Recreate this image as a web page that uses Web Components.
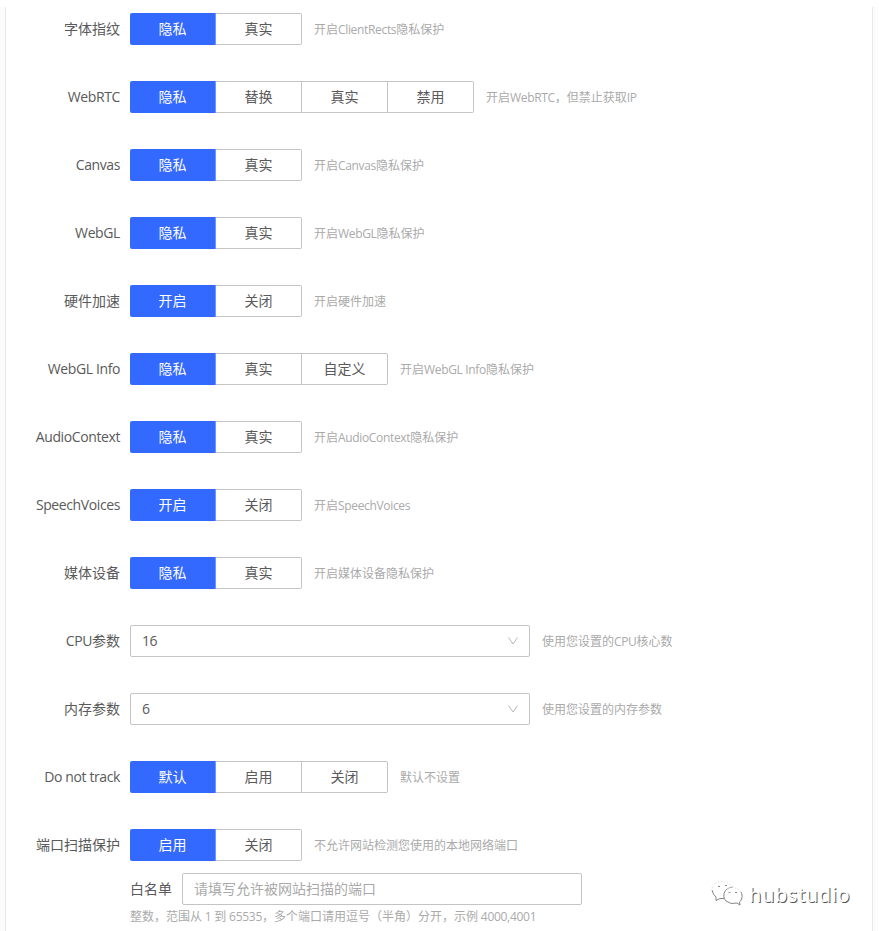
<!DOCTYPE html>
<html lang="zh-CN">
  <head>
    <meta charset="UTF-8">
    <meta name="viewport" content="width=device-width, initial-scale=1.0">

    <title>指纹设置</title>

    <style>
      body {
        margin: 0;
        background: #fff;
        color: #5a5a5a;
        font: 14px/22px "Open Sans", "Noto Sans CJK SC", sans-serif;
      }
    </style>
  </head>

  <body>
    <settings-panel>
      <form-row label="字体指纹" hint="开启ClientRects隐私保护">
        <radio-group options="隐私,真实"></radio-group>
      </form-row>
      <form-row label="WebRTC" hint="开启WebRTC，但禁止获取IP">
        <radio-group options="隐私,替换,真实,禁用"></radio-group>
      </form-row>
      <form-row label="Canvas" hint="开启Canvas隐私保护">
        <radio-group options="隐私,真实"></radio-group>
      </form-row>
      <form-row label="WebGL" hint="开启WebGL隐私保护">
        <radio-group options="隐私,真实"></radio-group>
      </form-row>
      <form-row label="硬件加速" hint="开启硬件加速">
        <radio-group options="开启,关闭"></radio-group>
      </form-row>
      <form-row label="WebGL Info" hint="开启WebGL Info隐私保护">
        <radio-group options="隐私,真实,自定义"></radio-group>
      </form-row>
      <form-row label="AudioContext" hint="开启AudioContext隐私保护">
        <radio-group options="隐私,真实"></radio-group>
      </form-row>
      <form-row label="SpeechVoices" hint="开启SpeechVoices">
        <radio-group options="开启,关闭"></radio-group>
      </form-row>
      <form-row label="媒体设备" hint="开启媒体设备隐私保护">
        <radio-group options="隐私,真实"></radio-group>
      </form-row>
      <form-row label="CPU参数" hint="使用您设置的CPU核心数">
        <select-box>16</select-box>
      </form-row>
      <form-row label="内存参数" hint="使用您设置的内存参数">
        <select-box>6</select-box>
      </form-row>
      <form-row label="Do not track" hint="默认不设置">
        <radio-group options="默认,启用,关闭"></radio-group>
      </form-row>
      <form-row label="端口扫描保护" hint="不允许网站检测您使用的本地网络端口">
        <radio-group options="启用,关闭"></radio-group>
      </form-row>
      <port-whitelist
        label="白名单"
        placeholder="请填写允许被网站扫描的端口"
        hint="整数，范围从 1 到 65535，多个端口请用逗号（半角）分开，示例 4000,4001"
      ></port-whitelist>
    </settings-panel>
    <water-mark>hubstudio</water-mark>

    <template id="settings-panel-template">
      <style>
        :host {
          display: block;
          box-sizing: border-box;
          height: 931px;
          padding: 7px 6px 0 5px;
          overflow: hidden;
          background: linear-gradient(#fff 7px, #fcfcfc 7px);
        }

        section {
          box-sizing: border-box;
          height: 924px;
          padding-top: 6px;
          border: solid #e8e8e8;
          border-width: 0 1px;
          background: #fff;
        }
      </style>
      <section><slot></slot></section>
    </template>

    <template id="form-row-template">
      <style>
        :host {
          display: flex;
          align-items: center;
          height: 32px;
          margin-bottom: 36px;
          white-space: nowrap;
        }

        .label {
          width: 114px;
          margin-right: 10px;
          text-align: right;
        }

        .hint {
          margin-left: 12px;
          padding-top: 2px;
          color: #aaa;
          font-size: 12px;
        }

        .latin {
          letter-spacing: -0.028em;
        }
      </style>
      <span class="label"></span>
      <slot></slot>
      <span class="hint"></span>
    </template>

    <template id="radio-group-template">
      <style>
        :host {
          display: flex;
        }

        .options {
          display: flex;
        }

        span {
          box-sizing: border-box;
          width: 86px;
          height: 32px;
          border: 1px solid #c4c4c4;
          border-left: 0;
          line-height: 30px;
          text-align: center;
        }

        span:first-child {
          border: 0;
          border-right: 1px solid #6f95ff;
          border-radius: 2px 0 0 2px;
          background: #3369ff;
          color: #fff;
          line-height: 32px;
        }

        span:last-child {
          border-radius: 0 2px 2px 0;
        }
      </style>
      <div class="options"></div>
    </template>

    <template id="select-box-template">
      <style>
        :host {
          display: flex;
          align-items: center;
          justify-content: space-between;
          box-sizing: border-box;
          width: 400px;
          height: 32px;
          padding: 0 11px;
          border: 1px solid #c4c4c4;
          border-radius: 2px;
        }

        span {
          letter-spacing: -0.4px;
        }
      </style>
      <span><slot></slot></span>
      <svg width="10" height="8" viewBox="0 0 10 8" fill="none" stroke="#b8b8b8">
        <path d="M.5 .5 5 7 9.500 .5"/>
      </svg>
    </template>

    <template id="port-whitelist-template">
      <style>
        :host {
          display: block;
          margin: -24px 0 0 124px;
          white-space: nowrap;
        }

        .field {
          display: flex;
          align-items: center;
        }

        .label {
          width: 52px;
        }

        .input {
          box-sizing: border-box;
          width: 400px;
          height: 32px;
          padding-left: 11px;
          border: 1px solid #c4c4c4;
          border-radius: 2px;
          color: #aaa;
          line-height: 30px;
        }

        .hint {
          color: #aaa;
          font-size: 12px;
          line-height: 24px;
        }

        .latin {
          letter-spacing: -0.024em;
        }
      </style>
      <div class="field">
        <span class="label"></span>
        <span class="input"></span>
      </div>
      <div class="hint"></div>
    </template>

    <template id="water-mark-template">
      <style>
        :host {
          position: absolute;
          left: 711px;
          top: 879px;
          display: flex;
          align-items: center;
          gap: 6px;
          color: #fff;
          font: 20px/32px "Noto Sans", sans-serif;
          letter-spacing: 0.6px;
          text-shadow: 1px 1px 0 #555;
        }
      </style>
      <svg width="32" height="28" viewBox="0 0 32 28" fill="none" stroke="#666" stroke-width=".8">
        <path d="M1 7C3 2 7 .5 11 .5s8 2 10 6" stroke="#ccc" stroke-dasharray="1 2"/>
        <path d="M1 9q1 5 4 7v3.500l4-2h4"/>
        <path d="M16 8q3-2 6-2" stroke="#999"/>
        <path d="M16 8C12 11 12 17 15 20q5 4 11 2l3 2-.5-3C31 19 32 15 30 11"/>
        <path d="M30 11C28 8 25 7 22 7" stroke="#ccc" stroke-dasharray="1 2"/>
        <path d="M7 5l1 1 1-1M14 4l1 1 1-1M17.500 11l1 1 1-1M24 11l1 1 1-1"/>
      </svg>
      <span><slot></slot></span>
    </template>

    <script>
      (function() {
        const attach = (element, id) => {
          const root = element.attachShadow({ mode: 'open' });
          root.appendChild(document.getElementById(id).content.cloneNode(true));
          return root;
        };

        // Latin runs are tracked a little tighter than the Chinese text around them
        const setText = (element, text) => {
          text.split(/([\x20-\x7e]+)/).filter(Boolean).forEach(run => {
            const span = document.createElement('span');
            span.textContent = run;
            if (/^[\x20-\x7e]/.test(run)) {
              span.className = 'latin';
            }
            element.appendChild(span);
          });
        };

        class SettingsPanel extends HTMLElement {
          constructor() {
            super();
            attach(this, 'settings-panel-template');
          }
        }

        class FormRow extends HTMLElement {
          constructor() {
            super();
            const root = attach(this, 'form-row-template');
            setText(root.querySelector('.label'), this.getAttribute('label'));
            setText(root.querySelector('.hint'), this.getAttribute('hint'));
          }
        }

        class RadioGroup extends HTMLElement {
          constructor() {
            super();
            const root = attach(this, 'radio-group-template');
            const options = root.querySelector('.options');
            this.getAttribute('options').split(',').forEach(text => {
              const option = document.createElement('span');
              option.textContent = text;
              options.appendChild(option);
            });
          }
        }

        class SelectBox extends HTMLElement {
          constructor() {
            super();
            attach(this, 'select-box-template');
          }
        }

        class PortWhitelist extends HTMLElement {
          constructor() {
            super();
            const root = attach(this, 'port-whitelist-template');
            root.querySelector('.label').textContent = this.getAttribute('label');
            root.querySelector('.input').textContent = this.getAttribute('placeholder');
            setText(root.querySelector('.hint'), this.getAttribute('hint'));
          }
        }

        class WaterMark extends HTMLElement {
          constructor() {
            super();
            attach(this, 'water-mark-template');
          }
        }

        customElements.define('settings-panel', SettingsPanel);
        customElements.define('form-row', FormRow);
        customElements.define('radio-group', RadioGroup);
        customElements.define('select-box', SelectBox);
        customElements.define('port-whitelist', PortWhitelist);
        customElements.define('water-mark', WaterMark);
      }());
    </script>
  </body>
</html>
